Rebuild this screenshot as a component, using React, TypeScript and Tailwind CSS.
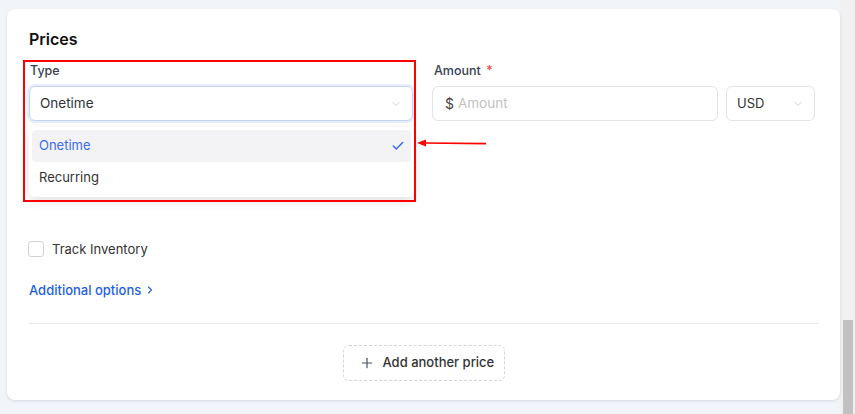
import { Check, ChevronDown, ChevronRight, Plus } from "lucide-react";

export default function App() {
  return (
    <div className="flex h-[414px] w-[855px] overflow-hidden bg-[#f1f5f9] font-['Inter',sans-serif] text-[#1f2937]">
      {/* Content area */}
      <div className="w-[840px] pl-[7px] pt-[9px]">
        <div className="relative h-[391px] w-[833px] rounded-[8px] bg-white px-[22px] pt-[18px] shadow-[0_1px_3px_rgba(15,23,42,0.12)]">
          <h2 className="text-[16px] font-semibold leading-[24px] text-[#111111]">Prices</h2>

          <div className="mt-[11px] flex">
            {/* Type */}
            <div className="relative w-[384px]">
              <div className="pl-[1px] text-[12.5px] font-medium leading-[18px] text-[#374151]">Type</div>
              <div className="mt-[6px] flex h-[35px] items-center justify-between rounded-[6px] border border-[#c3d3f3] pl-[10px] pr-[10px] shadow-[0_0_0_2px_#e6edfb]">
                <span className="text-[13.5px] text-[#333333]">Onetime</span>
                <ChevronDown className="h-[12px] w-[12px] text-[#c4c4c4]" strokeWidth={1.5} />
              </div>

              {/* Dropdown menu */}
              <div className="absolute left-0 top-[65px] z-10 w-[385px] rounded-[6px] bg-white p-[3px] shadow-[0_4px_12px_rgba(0,0,0,0.12)]">
                <div className="flex h-[32px] items-center justify-between rounded-[4px] bg-[#f3f3f5] pl-[7px] pr-[6px]">
                  <span className="text-[13px] text-[#3b6cf0]">Onetime</span>
                  <Check className="h-[14px] w-[14px] text-[#3b6cf0]" strokeWidth={2.6} />
                </div>
                <div className="flex h-[32px] items-center pl-[7px]">
                  <span className="text-[13px] text-[#333333]">Recurring</span>
                </div>
              </div>
            </div>

            {/* Amount */}
            <div className="ml-[19px]">
              <div className="pl-[2px] text-[12.5px] font-medium leading-[18px] text-[#374151]">
                Amount <span className="ml-[2px] text-[#ef4444]">*</span>
              </div>
              <div className="mt-[6px] flex gap-[8px]">
                <div className="flex h-[35px] w-[286px] items-center rounded-[6px] border border-[#e2e4e8] pl-[12px]">
                  <span className="text-[14px] text-[#444444]">$</span>
                  <span className="ml-[4px] text-[13.5px] text-[#c2c2c2]">Amount</span>
                </div>
                <div className="flex h-[35px] w-[89px] items-center justify-between rounded-[6px] border border-[#e2e4e8] pl-[10px] pr-[10px]">
                  <span className="text-[13px] text-[#333333]">USD</span>
                  <ChevronDown className="h-[12px] w-[12px] text-[#c4c4c4]" strokeWidth={1.5} />
                </div>
              </div>
            </div>
          </div>

          {/* Track inventory */}
          <div className="mt-[118px] flex items-center gap-[8px]">
            <div className="-ml-[1px] h-[16px] w-[16px] rounded-[3px] border border-[#cfd3d9] bg-white" />
            <span className="text-[13px] leading-[20px] text-[#333333]">Track Inventory</span>
          </div>

          <div className="mt-[21px] flex items-center gap-[3px] text-[13px] font-medium leading-[20px] text-[#1f5fe0]">
            Additional options
            <ChevronRight className="h-[12px] w-[12px]" strokeWidth={2.2} />
          </div>

          <div className="mt-[23px] h-px w-full bg-[#e7e8eb]" />

          <div className="mt-[21px] flex justify-center">
            <div className="flex h-[36px] w-[162px] items-center gap-[8px] rounded-[6px] border border-dashed border-[#d4d6da] pl-[15px]">
              <Plus className="h-[16px] w-[16px] text-[#4b5563]" strokeWidth={1.8} />
              <span className="text-[13px] font-medium text-[#333333]">Add another price</span>
            </div>
          </div>

          {/* Annotation box */}
          <div className="absolute left-[16px] top-[51px] z-20 h-[142px] w-[393px] border-2 border-[#ff0000]" />
          {/* Annotation arrow */}
          <svg className="absolute left-[409px] top-[128px] z-20" width="72" height="12" viewBox="0 0 72 12">
            <line x1="8" y1="6" x2="70" y2="6.6" stroke="#ff0000" strokeWidth="1.6" />
            <polygon points="1,6 10,2.5 10,9.5" fill="#ff0000" />
          </svg>
        </div>
      </div>

      {/* Scrollbar */}
      <div className="w-[15px] bg-[#f1f1f1]">
        <div className="ml-[3px] mt-[320px] h-[94px] w-[10px] bg-[#c1c1c1]" />
      </div>
    </div>
  );
}
